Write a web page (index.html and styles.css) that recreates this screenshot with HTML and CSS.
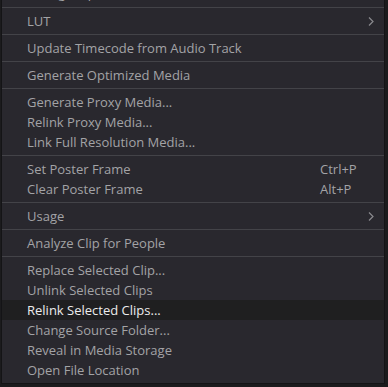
FILE: index.html
```html
<!DOCTYPE html>
<html>
<head>
<meta charset="utf-8">
<link rel="stylesheet" href="styles.css">
</head>
<body>
<div class="menu">
  <div class="item cut">Change Input Size...</div>
  <div class="sep"></div>
  <div class="item"><span class="label">LUT</span><span class="short"></span><svg class="chev" width="6" height="9" viewBox="0 0 6 9"><path d="M1 0.5 L5 4.5 L1 8.5" fill="none" stroke="#8a8a8e" stroke-width="1.2"/></svg></div>
  <div class="sep"></div>
  <div class="item"><span class="label">Update Timecode from Audio Track</span></div>
  <div class="sep"></div>
  <div class="item"><span class="label">Generate Optimized Media</span></div>
  <div class="sep"></div>
  <div class="item"><span class="label">Generate Proxy Media...</span></div>
  <div class="item"><span class="label">Relink Proxy Media...</span></div>
  <div class="item"><span class="label">Link Full Resolution Media...</span></div>
  <div class="sep"></div>
  <div class="item"><span class="label">Set Poster Frame</span><span class="short">Ctrl+P</span></div>
  <div class="item"><span class="label">Clear Poster Frame</span><span class="short">Alt+P</span></div>
  <div class="sep"></div>
  <div class="item"><span class="label">Usage</span><span class="short"></span><svg class="chev" width="6" height="9" viewBox="0 0 6 9"><path d="M1 0.5 L5 4.5 L1 8.5" fill="none" stroke="#8a8a8e" stroke-width="1.2"/></svg></div>
  <div class="sep"></div>
  <div class="item"><span class="label">Analyze Clip for People</span></div>
  <div class="sep"></div>
  <div class="item"><span class="label">Replace Selected Clip...</span></div>
  <div class="item"><span class="label">Unlink Selected Clips</span></div>
  <div class="item active"><span class="label">Relink Selected Clips...</span></div>
  <div class="item"><span class="label">Change Source Folder...</span></div>
  <div class="item"><span class="label">Reveal in Media Storage</span></div>
  <div class="item"><span class="label">Open File Location</span></div>
</div>
</body>
</html>
```
FILE: styles.css
```css
html, body {
  margin: 0;
  padding: 0;
  background: #1b1b1d;
  overflow: hidden;
}
body {
  width: 388px;
  height: 387px;
}
.menu {
  box-sizing: border-box;
  width: 384px;
  margin-left: 1px;
  margin-top: -20px;
  background: #29282e;
  border: 1px solid #141416;
  padding: 3px 0 3px 0;
  font-family: "Open Sans", "Noto Sans", sans-serif;
  font-size: 13px;
  color: #a3a3a6;
}
.item {
  height: 20px;
  display: grid;
  grid-template-columns: 1fr 48px 16px;
  align-items: center;
  padding-left: 25px;
  line-height: 20px;
  white-space: nowrap;
}
.item.cut {
  display: block;
  line-height: 18px;
}
.item.active {
  background: #1f1f20;
  color: #ececec;
}
.short {
  color: #a3a3a6;
}
.chev {
  display: block;
}
.sep {
  height: 1px;
  background: #434348;
  margin: 3px 0;
}
```
